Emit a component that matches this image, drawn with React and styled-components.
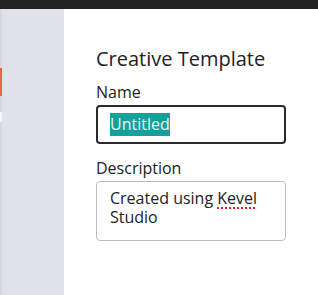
import React from "react";
import styled, { createGlobalStyle } from "styled-components";

const Global = createGlobalStyle`
  html, body { margin: 0; padding: 0; background: #fff; }
  body { font-family: "Open Sans", "Noto Sans", sans-serif; color: #222; }
`;

const Page = styled.div`
  width: 318px;
  height: 295px;
  display: flex;
  flex-direction: column;
  overflow: hidden;
`;

const TopBar = styled.div`
  height: 9px;
  background: #222222;
  flex: none;
`;

const Body = styled.div`
  flex: 1;
  display: flex;
`;

const Side = styled.div`
  width: 64px;
  flex: none;
  background: #e1e1ea;
  position: relative;
  box-shadow: inset 2px 0 2px -1px rgba(0,0,0,0.08);
`;

const Marker = styled.div`
  position: absolute;
  left: 0;
  top: ${p => p.$top}px;
  width: 2px;
  height: ${p => p.$h}px;
  background: ${p => p.$color};
`;

const Main = styled.div`
  flex: 1;
  padding: 36px 32px 0 32px;
  display: flex;
  flex-direction: column;
`;

const Title = styled.h2`
  margin: 0 0 8px 0;
  font-size: 20px;
  font-weight: 400;
  line-height: 28px;
  color: #222;
`;

const Label = styled.div`
  font-size: 16px;
  line-height: 22px;
  color: #222;
  margin-bottom: 2px;
`;

const Field = styled.div`
  box-sizing: border-box;
  width: 190px;
  height: ${p => p.$h}px;
  border: ${p => (p.$focused ? "2px solid #2a2a2a" : "1px solid #bdbdbd")};
  border-radius: 4px;
  padding: ${p => (p.$focused ? "6px 12px" : "7px 13px")};
  font-size: 16px;
  line-height: 19px;
  color: #222;
  margin-bottom: ${p => p.$mb || 0}px;
`;

const Selected = styled.span`
  display: inline-block;
  background: #14a09b;
  color: #eaf7f6;
  line-height: 23px;
`;

const Misspelled = styled.span`
  text-decoration: underline dotted #e02020;
  text-decoration-thickness: 2px;
  text-underline-offset: 3px;
`;

export default function App() {
  return (
    <>
      <Global />
      <Page>
        <TopBar />
        <Body>
          <Side>
            <Marker $top={59} $h={28} $color="#f0614a" />
            <Marker $top={103} $h={10} $color="#f6f6f8" />
          </Side>
          <Main>
            <Title>Creative Template</Title>
            <Label>Name</Label>
            <Field $focused $h={39} $mb={13}>
              <Selected>Untitled</Selected>
            </Field>
            <Label>Description</Label>
            <Field $h={60}>
              Created using <Misspelled>Kevel</Misspelled> Studio
            </Field>
          </Main>
        </Body>
      </Page>
    </>
  );
}
